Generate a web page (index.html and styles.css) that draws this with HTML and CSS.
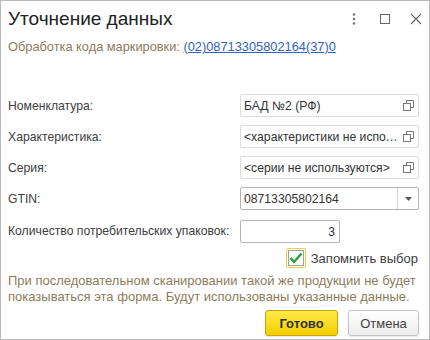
FILE: index.html
```html
<!DOCTYPE html>
<html lang="ru">
<head>
  <meta charset="UTF-8" />
  <meta name="viewport" content="width=device-width, initial-scale=1.0" />
  <title>Уточнение данных</title>
  <link rel="stylesheet" href="styles.css">
</head>
<body>

  <div class="window">
    <div class="header">
      <div class="title">Уточнение данных</div>
      <div class="win-buttons">
        <svg class="win-icon" width="14" height="14" viewBox="0 0 14 14">
          <circle cx="7" cy="2.5" r="1.3" fill="#777" />
          <circle cx="7" cy="7" r="1.3" fill="#777" />
          <circle cx="7" cy="11.5" r="1.3" fill="#777" />
        </svg>
        <svg class="win-icon" width="14" height="14" viewBox="0 0 14 14">
          <rect x="2.5" y="2.5" width="9" height="9" fill="none" stroke="#666" stroke-width="1" />
        </svg>
        <svg class="win-icon" width="14" height="14" viewBox="0 0 14 14">
          <path d="M2 2 L12 12 M12 2 L2 12" stroke="#666" stroke-width="1.1" />
        </svg>
      </div>
    </div>

    <div class="subtitle">
      Обработка кода маркировки: <a href="#" class="code-link">(02)08713305802164(37)0</a>
    </div>

    <div class="form">
      <div class="label">Номенклатура:</div>
      <div class="field">
        <span class="field-text">БАД №2 (РФ)</span>
        <span class="field-btn"><svg width="11" height="11" viewBox="0 0 11 11"><path d="M3.5 3.5 V0.5 H10.5 V7.5 H7.5" fill="none" stroke="#777" /><rect x="0.5" y="3.5" width="7" height="7" fill="none" stroke="#777" /></svg></span>
      </div>

      <div class="label">Характеристика:</div>
      <div class="field">
        <span class="field-text">&lt;характеристики не используются&gt;</span>
        <span class="field-btn"><svg width="11" height="11" viewBox="0 0 11 11"><path d="M3.5 3.5 V0.5 H10.5 V7.5 H7.5" fill="none" stroke="#777" /><rect x="0.5" y="3.5" width="7" height="7" fill="none" stroke="#777" /></svg></span>
      </div>

      <div class="label">Серия:</div>
      <div class="field">
        <span class="field-text">&lt;серии не используются&gt;</span>
        <span class="field-btn"><svg width="11" height="11" viewBox="0 0 11 11"><path d="M3.5 3.5 V0.5 H10.5 V7.5 H7.5" fill="none" stroke="#777" /><rect x="0.5" y="3.5" width="7" height="7" fill="none" stroke="#777" /></svg></span>
      </div>

      <div class="label">GTIN:</div>
      <div class="field field-edit">
        <span class="field-text">08713305802164</span>
        <span class="field-btn field-drop"><svg width="7" height="4" viewBox="0 0 7 4"><path d="M0 0 H7 L3.5 4 Z" fill="#555" /></svg></span>
      </div>

      <div class="label">Количество потребительских упаковок:</div>
      <div class="field field-edit field-number">
        <span class="field-text">3</span>
      </div>
    </div>

    <div class="remember">
      <span class="check-focus">
        <span class="check-box">
          <svg width="14" height="12" viewBox="0 0 14 12"><path d="M1.5 6 L5 10 L12.5 1.5" fill="none" stroke="#1fa23a" stroke-width="2.4" /></svg>
        </span>
      </span>
      <span class="check-label">Запомнить выбор</span>
    </div>

    <div class="note">
      При последовательном сканировании такой же продукции не будет<br>
      показываться эта форма. Будут использованы указанные данные.
    </div>

    <div class="footer">
      <button class="btn btn-default">Готово</button>
      <button class="btn">Отмена</button>
    </div>
  </div>

</body>
</html>
```

FILE: styles.css
```css
body {
  margin: 0;
  font-family: "Liberation Sans", Arial, sans-serif;
  background: #fff;
}

.window {
  width: 430px;
  height: 340px;
  box-sizing: border-box;
  border: 1px solid #b9b9b9;
  padding: 0 10px 0 7px;
  background: #fff;
}

.header {
  display: flex;
  justify-content: space-between;
  align-items: center;
  height: 34px;
  padding-top: 1px;
}

.title {
  font-size: 19px;
  color: #222;
}

.win-buttons {
  display: flex;
  gap: 17px;
  margin-right: -4px;
}

.subtitle {
  font-size: 12.8px;
  color: #8d7c5a;
  margin-top: 3px;
  height: 20px;
}

.code-link {
  color: #3363c4;
  text-decoration: underline;
}

.form {
  display: grid;
  grid-template-columns: 232px 179px;
  row-gap: 8px;
  align-items: center;
  margin-top: 35px;
}

.label {
  font-size: 12.2px;
  color: #404040;
  white-space: nowrap;
}

.field {
  display: flex;
  align-items: center;
  height: 23px;
  box-sizing: border-box;
  border: 1px solid #dcdcdc;
  border-radius: 2px;
  font-size: 12.2px;
  color: #333;
  background: #fff;
}

.field-edit {
  border-color: #b5b5b5;
}

.field-text {
  flex: 1;
  padding-left: 3px;
  white-space: nowrap;
  overflow: hidden;
  text-overflow: ellipsis;
}

.field-btn {
  display: flex;
  align-items: center;
  justify-content: center;
  width: 20px;
  height: 100%;
}

.field-drop {
  border-left: 1px solid #d6d6d6;
}

.field-number {
  width: 100px;
  margin-top: 2px;
}

.field-number .field-text {
  text-align: right;
  padding-right: 4px;
}

.remember {
  display: flex;
  justify-content: flex-end;
  align-items: center;
  gap: 5px;
  margin-top: 5px;
  margin-right: 1px;
}

.check-focus {
  display: flex;
  padding: 1px;
  border: 1px solid #f3cf3c;
  border-radius: 2px;
}

.check-box {
  display: flex;
  align-items: center;
  justify-content: center;
  width: 14px;
  height: 14px;
  border: 1px solid #a0a0a0;
  background: #fff;
}

.check-label {
  font-size: 13px;
  color: #404040;
}

.note {
  font-size: 13px;
  line-height: 16px;
  color: #8d7c5a;
  white-space: nowrap;
  margin-top: 5px;
}

.footer {
  display: flex;
  justify-content: flex-end;
  gap: 10px;
  margin-top: 5px;
}

.btn {
  height: 26px;
  width: 71px;
  font-family: "Liberation Sans", Arial, sans-serif;
  font-size: 13px;
  color: #404040;
  border: 1px solid #c2c2c2;
  border-radius: 3px;
  background: linear-gradient(to bottom, #ffffff, #ececec);
  box-shadow: 0 1px 1px rgba(0,0,0,0.1);
}

.btn-default {
  width: 73px;
  font-weight: bold;
  color: #333;
  border-color: #c9a400;
  background: linear-gradient(to bottom, #ffe94a, #f2d000);
}
```
